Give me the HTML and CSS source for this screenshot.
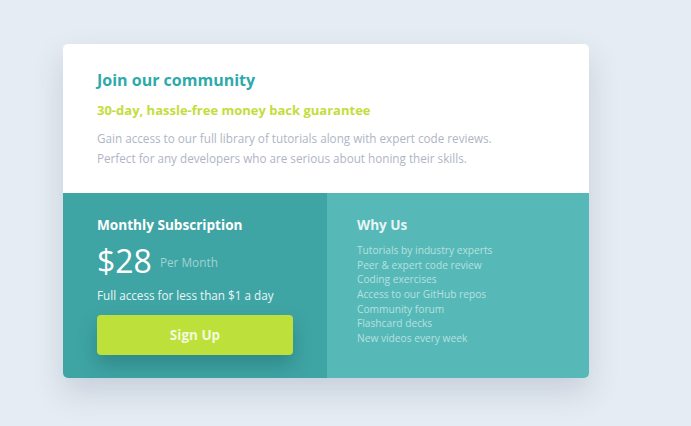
FILE: index.html
```html
<!DOCTYPE html>
<html lang="en">
<head>
<meta charset="utf-8">
<title>Single price grid</title>
<link rel="stylesheet" href="styles.css">
</head>
<body>
<main class="page">
  <section class="card">
    <div class="top">
      <h1 class="title">Join our community</h1>
      <h2 class="guarantee">30-day, hassle-free money back guarantee</h2>
      <p class="intro">Gain access to our full library of tutorials along with expert code reviews.<br>Perfect for any developers who are serious about honing their skills.</p>
    </div>
    <div class="bottom">
      <div class="subscription">
        <h3 class="heading">Monthly Subscription</h3>
        <div class="price"><span class="amount">$28</span><span class="per">Per Month</span></div>
        <p class="access">Full access for less than $1 a day</p>
        <button class="signup">Sign Up</button>
      </div>
      <div class="why">
        <h3 class="heading">Why Us</h3>
        <ul class="reasons">
          <li>Tutorials by industry experts</li>
          <li>Peer &amp; expert code review</li>
          <li>Coding exercises</li>
          <li>Access to our GitHub repos</li>
          <li>Community forum</li>
          <li>Flashcard decks</li>
          <li>New videos every week</li>
        </ul>
      </div>
    </div>
  </section>
</main>
</body>
</html>
```
FILE: styles.css
```css
* { box-sizing: border-box; }
html, body { margin: 0; padding: 0; }
body {
  background: #e5ecf3;
  font-family: "Open Sans", "Liberation Sans", sans-serif;
  width: 691px;
  height: 426px;
  overflow: hidden;
}
.page {
  padding: 44px 0 0 63px;
}
.card {
  width: 526px;
  height: 334px;
  border-radius: 5px;
  overflow: hidden;
  display: flex;
  flex-direction: column;
  box-shadow: 0 14px 30px rgba(60, 80, 110, 0.18);
}
.top {
  background: #fff;
  height: 149px;
  padding: 26px 34px 0;
}
.title {
  margin: 0;
  font-size: 16px;
  line-height: 20px;
  font-weight: 700;
  color: #2eaaaa;
}
.guarantee {
  margin: 10px 0 0;
  font-size: 13px;
  line-height: 20px;
  font-weight: 700;
  color: #c3dd3a;
}
.intro {
  margin: 8px 0 0;
  font-size: 11.7px;
  line-height: 20px;
  color: #b0b5c6;
}
.bottom {
  flex: 1;
  display: flex;
}
.subscription {
  width: 264px;
  background: #3fa4a4;
  padding: 22px 34px 0;
  color: #fff;
}
.why {
  flex: 1;
  background: #56b8b7;
  padding: 22px 30px 0;
  color: #fff;
}
.heading {
  margin: 0;
  font-size: 13.6px;
  line-height: 20px;
  font-weight: 700;
}
.why .heading { color: #e6f5f5; }
.price {
  display: flex;
  align-items: center;
  margin-top: 9px;
  height: 34px;
}
.amount {
  font-size: 32px;
  font-weight: 400;
  line-height: 34px;
}
.per {
  margin-left: 8px;
  margin-top: 1px;
  font-size: 11.8px;
  color: #9fd3d3;
}
.access {
  margin: 8px 0 0;
  font-size: 11.7px;
  line-height: 18px;
  color: #e9f6f6;
}
.signup {
  display: block;
  margin-top: 11px;
  width: 196px;
  height: 40px;
  border: 0;
  border-radius: 4px;
  background: #bde13a;
  color: #f3f9dd;
  font-family: inherit;
  font-size: 13.5px;
  font-weight: 700;
  box-shadow: 0 10px 18px rgba(20, 90, 90, 0.35);
}
.reasons {
  list-style: none;
  margin: 8px 0 0;
  padding: 0;
  font-size: 10.2px;
  line-height: 14.67px;
  color: #b6e1e0;
}
```
